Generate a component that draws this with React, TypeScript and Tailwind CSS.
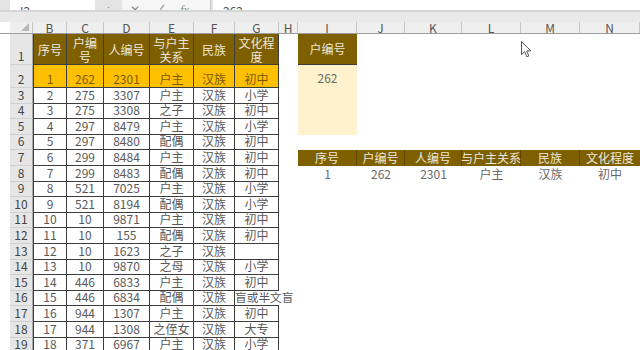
import React from "react";

const F = { fontFamily: '"Noto Sans CJK SC", "Noto Sans", sans-serif' };

const W: Record<string, number> = { B: 34, C: 37, D: 46, E: 44, F: 41, G: 44, H: 19, I: 59, J: 48, K: 57, L: 59, M: 59, N: 60 };
const LEFT = ["B", "C", "D", "E", "F", "G"];
const RIGHT = ["I", "J", "K", "L", "M", "N"];

const data: (string | number)[][] = [
  [1, 262, 2301, "户主", "汉族", "初中"],
  [2, 275, 3307, "户主", "汉族", "小学"],
  [3, 275, 3308, "之子", "汉族", "初中"],
  [4, 297, 8479, "户主", "汉族", "小学"],
  [5, 297, 8480, "配偶", "汉族", "初中"],
  [6, 299, 8484, "户主", "汉族", "初中"],
  [7, 299, 8483, "配偶", "汉族", "初中"],
  [8, 521, 7025, "户主", "汉族", "小学"],
  [9, 521, 8194, "配偶", "汉族", "小学"],
  [10, 10, 9871, "户主", "汉族", "初中"],
  [11, 10, 155, "配偶", "汉族", "初中"],
  [12, 10, 1623, "之子", "汉族", ""],
  [13, 10, 9870, "之母", "汉族", "小学"],
  [14, 446, 6833, "户主", "汉族", "初中"],
  [15, 446, 6834, "配偶", "汉族", "盲或半文盲"],
  [16, 944, 1307, "户主", "汉族", "初中"],
  [17, 944, 1308, "之侄女", "汉族", "大专"],
  [18, 371, 6967, "户主", "汉族", "小学"],
];

const headers = ["序号", "户编\n号", "人编号", "与户主\n关系", "民族", "文化程\n度"];
const headers2 = ["序号", "户编号", "人编号", "与户主关系", "民族", "文化程度"];

function RowHeader({ n, h }: { n: number; h: string }) {
  return (
    <div className={`w-[23px] ${h} shrink-0 bg-[#e6e6e6] border-r border-r-[#a8a8a8] border-b border-b-[#d0d0d0] flex items-end justify-center text-[12px] leading-[14px] text-[#444] pb-[1px]`}>
      {n}
    </div>
  );
}

function Cursor() {
  return (
    <svg className="absolute left-[521px] top-[41px]" width="11" height="17" viewBox="0 0 11 17">
      <path d="M0.5 0.5 L0.5 13.5 L3.6 10.6 L5.8 15.8 L7.8 15 L5.7 9.9 L9.8 9.9 Z" fill="#fff" stroke="#555" strokeWidth="1" strokeLinejoin="round" />
    </svg>
  );
}

export default function App() {
  const rowH = "h-[15.6px]";
  return (
    <div className="relative w-[640px] h-[350px] overflow-hidden bg-white" style={F}>
      {/* formula bar (cut off) */}
      <div className="flex h-[10px] overflow-hidden bg-[#e4e4e4]">
        <div className="ml-[10px] w-[85px] bg-white flex items-end">
          <span className="ml-[10px] -mb-[8px] text-[12px] leading-[14px] text-[#555]">I2</span>
        </div>
        <div className="w-[27px] flex items-end justify-center">
          <span className="-mb-[6px] text-[11px] leading-[12px] text-[#888]">⋮</span>
        </div>
        <div className="w-[88px] bg-[#f6f6f6] flex items-end text-[#888]">
          <span className="ml-[8px] -mb-[5px] text-[12px] leading-[12px]">✕</span>
          <span className="ml-[16px] -mb-[5px] text-[12px] leading-[12px]">✓</span>
          <span className="ml-[16px] -mb-[6px] text-[12px] leading-[12px] italic" style={{ fontFamily: '"Liberation Serif", serif' }}>fx</span>
        </div>
        <div className="w-[1px] bg-[#c8c8c8]" />
        <div className="ml-[2px] flex-1 bg-white flex items-end">
          <span className="ml-[10px] -mb-[8px] text-[12px] leading-[14px] text-[#555]">262</span>
        </div>
      </div>
      {/* gray band */}
      <div className="h-[12px] bg-[#e9e9e9] border-t-2 border-t-[#d6d6d6]" />
      {/* column header */}
      <div className="flex h-[12px] bg-[#efefef] border-b border-b-[#9e9e9e]">
        <div className="w-[10px] shrink-0 bg-white" />
        <div className="w-[23px] shrink-0 border-r border-r-[#c4c4c4] relative">
          <svg className="absolute right-[3px] bottom-[2px]" width="8" height="8" viewBox="0 0 8 8">
            <path d="M8 0 L8 8 L0 8 Z" fill="#b8b8b8" />
          </svg>
        </div>
        {[...LEFT, "H", ...RIGHT].map((c) => (
          <div key={c} className="shrink-0 border-r border-r-[#c8c8c8] flex items-center justify-center text-[12px] leading-[12px] text-[#555]" style={{ width: W[c] }}>
            {c}
          </div>
        ))}
      </div>
      {/* row 1 */}
      <div className="flex h-[31px]">
        <div className="w-[10px] shrink-0" />
        <RowHeader n={1} h="h-[31px]" />
        {LEFT.map((c, i) => (
          <div key={c} className={`shrink-0 h-full bg-[#7f6000] border-r border-b border-[#3d3d3d] ${i === 0 ? "border-l" : ""} flex items-center justify-center text-center whitespace-pre text-[12px] leading-[14px] pt-[2px] text-[#ece8dc]`} style={{ width: W[c] }}>
            {headers[i]}
          </div>
        ))}
        <div className="w-[19px] shrink-0" />
        <div className="w-[59px] shrink-0 h-full bg-[#7f6000] border-b border-[#3d3d3d] flex items-center justify-center text-[12px] text-[#ece8dc]">户编号</div>
      </div>
      {/* data rows */}
      {data.map((r, idx) => {
        const sheetRow = idx + 2;
        const first = idx === 0;
        const h = first ? "h-[23px]" : rowH;
        return (
          <div key={sheetRow} className={`flex ${h}`}>
            <div className="w-[10px] shrink-0" />
            <RowHeader n={sheetRow} h={h} />
            {LEFT.map((c, i) => {
              const v = r[i];
              const overflow = c === "G" && String(v).length > 3;
              return (
                <div
                  key={c}
                  className={`shrink-0 h-full ${first ? "bg-[#ffc000] text-[#7a5a00]" : "text-[#595959]"} border-b border-[#3d3d3d] ${overflow ? "" : "border-r"} ${i === 0 ? "border-l" : ""} relative flex items-end justify-center text-[12px] leading-[14px] pb-[1px]`}
                  style={{ width: W[c] }}
                >
                  {overflow ? (
                    <div className="absolute left-0 top-0 bottom-0 w-[62px] overflow-hidden">
                      <span className="absolute left-0 bottom-[1px] whitespace-nowrap text-[11.7px] leading-[14px]">{v}</span>
                    </div>
                  ) : (
                    v
                  )}
                </div>
              );
            })}
            <div className="w-[19px] shrink-0" />
            {sheetRow >= 2 && sheetRow <= 5 && (
              <div className="w-[59px] shrink-0 h-full bg-[#fff2cc] flex items-end justify-center text-[12px] leading-[14px] pb-[3px] text-[#6a6a6a]">
                {sheetRow === 2 ? "262" : ""}
              </div>
            )}
            {sheetRow === 7 &&
              RIGHT.map((c, i) => (
                <div key={c} className={`shrink-0 h-full bg-[#7f6000] ${i < 5 ? "border-r border-r-[#5e4700]" : ""} flex items-center justify-center whitespace-nowrap text-[12px] leading-[14px] text-[#ece8dc]`} style={{ width: W[c] }}>
                  {headers2[i]}
                </div>
              ))}
            {sheetRow === 8 &&
              ["1", "262", "2301", "户主", "汉族", "初中"].map((t, i) => (
                <div key={i} className="shrink-0 h-full flex items-end justify-center text-[12px] leading-[14px] pb-[1px] text-[#6a6a6a]" style={{ width: W[RIGHT[i]] }}>
                  {t}
                </div>
              ))}
          </div>
        );
      })}
      <Cursor />
    </div>
  );
}
